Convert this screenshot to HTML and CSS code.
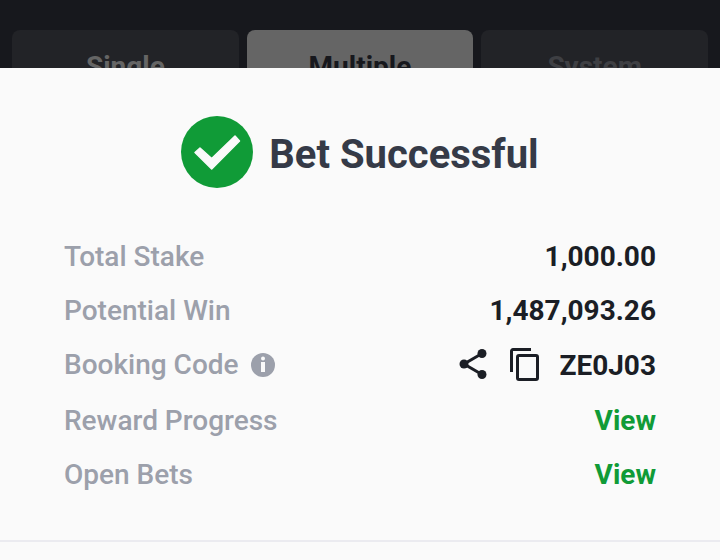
FILE: index.html
```html
<!DOCTYPE html>
<html lang="en">

<head>
  <meta charset="UTF-8">
  <meta name="viewport" content="width=device-width, initial-scale=1.0">
  <title>Bet Successful</title>
  <link rel="stylesheet" href="styles.css">
</head>

<body>
  <nav class="tabs">
    <button class="tab">Single</button>
    <button class="tab active">Multiple</button>
    <button class="tab disabled">System</button>
  </nav>

  <main class="sheet">
    <header class="sheet-header">
      <svg class="check" viewBox="0 0 72 72" aria-hidden="true">
        <circle cx="36" cy="36" r="36" fill="#109b37"/>
        <path d="M19 32L30.700 42.500L54 20L58.500 25L30.700 53L14 36.500z" fill="#fafafa" stroke="#fafafa" stroke-width="1.500" stroke-linejoin="round"/>
      </svg>
      <h1>Bet Successful</h1>
    </header>

    <dl class="details">
      <div class="row">
        <dt>Total Stake</dt>
        <dd>1,000.00</dd>
      </div>
      <div class="row">
        <dt>Potential Win</dt>
        <dd>1,487,093.26</dd>
      </div>
      <div class="row">
        <dt>
          Booking Code
          <button class="icon-button" aria-label="About booking codes">
            <svg class="info" viewBox="0 0 24 24">
              <circle cx="12" cy="12" r="12" fill="#9ca0ab"/>
              <circle cx="12" cy="5.500" r="2" fill="#fafafa"/>
              <path d="M10 9h4v10h-4z" fill="#fafafa"/>
            </svg>
          </button>
        </dt>
        <dd>
          <button class="icon-button" aria-label="Share">
            <svg class="action" viewBox="0 0 30 36">
              <path d="M23 5.500L5 16l18 10.500" fill="none" stroke="#1b1e25" stroke-width="3"/>
              <circle cx="23" cy="5.500" r="4.500" fill="#1b1e25"/>
              <circle cx="5" cy="16" r="4.500" fill="#1b1e25"/>
              <circle cx="23" cy="26.500" r="4.500" fill="#1b1e25"/>
            </svg>
          </button>
          <button class="icon-button" aria-label="Copy">
            <svg class="action" viewBox="0 0 30 36">
              <path d="M22 1.500H4a1.500 1.500 0 0 0-1.500 1.500V24" fill="none" stroke="#1b1e25" stroke-width="3"/>
              <rect x="8.500" y="7.500" width="20" height="24" rx="1.500" fill="none" stroke="#1b1e25" stroke-width="3"/>
            </svg>
          </button>
          <span>ZE0J03</span>
        </dd>
      </div>
      <div class="row">
        <dt>Reward Progress</dt>
        <dd><a href="#">View</a></dd>
      </div>
      <div class="row">
        <dt>Open Bets</dt>
        <dd><a href="#">View</a></dd>
      </div>
    </dl>
  </main>
</body>

</html>
```

FILE: styles.css
```css
* {
  box-sizing: border-box;
}

body {
  margin: 0;
  background-color: #fafafa;
  font-family: Roboto, "Liberation Sans", sans-serif;
  font-size: 28px;
  line-height: 34px;
}

button {
  border: none;
  font: inherit;
  cursor: pointer;
}

.tabs {
  display: grid;
  grid-template-columns: repeat(3, 1fr);
  gap: 8px;
  padding: 30px 12px 0;
  background-color: #17181d;
}

.tab {
  height: 74px;
  border-radius: 8px;
  background-color: #222327;
  color: #656565;
  font-weight: 700;
}

.tab.active {
  background-color: #656565;
  color: #17181d;
}

.tab.disabled {
  color: #3e3f43;
}

/* the sheet slides up over the lower half of the tabs */
.sheet {
  position: relative;
  margin-top: -36px;
  padding: 48px 64px;
  background-color: #fafafa;
  border-bottom: 2px solid #ebebf0;
}

.sheet-header {
  display: flex;
  justify-content: center;
  align-items: center;
  gap: 16px;
}

.sheet-header h1 {
  margin: 6px 0 0;
  color: #353a47;
  font-size: 40px;
  line-height: 48px;
  font-weight: 700;
}

.check {
  width: 72px;
  height: 72px;
}

.details {
  display: flex;
  flex-direction: column;
  gap: 20px;
  margin: 52px 0 0;
}

.row {
  display: flex;
  justify-content: space-between;
  align-items: flex-start;
}

.row dt {
  display: flex;
  align-items: center;
  gap: 12px;
  color: #9ca0ab;
  font-weight: 500;
}

.row dd {
  display: flex;
  align-items: center;
  gap: 20px;
  margin: 0;
  color: #1b1e25;
  font-weight: 700;
}

.row a {
  color: #109b37;
  text-decoration: none;
}

.icon-button {
  padding: 0;
  background: none;
}

.icon-button svg {
  display: block;
}

.info {
  width: 24px;
  height: 24px;
}

.action {
  width: 30px;
  height: 36px;
}
```
